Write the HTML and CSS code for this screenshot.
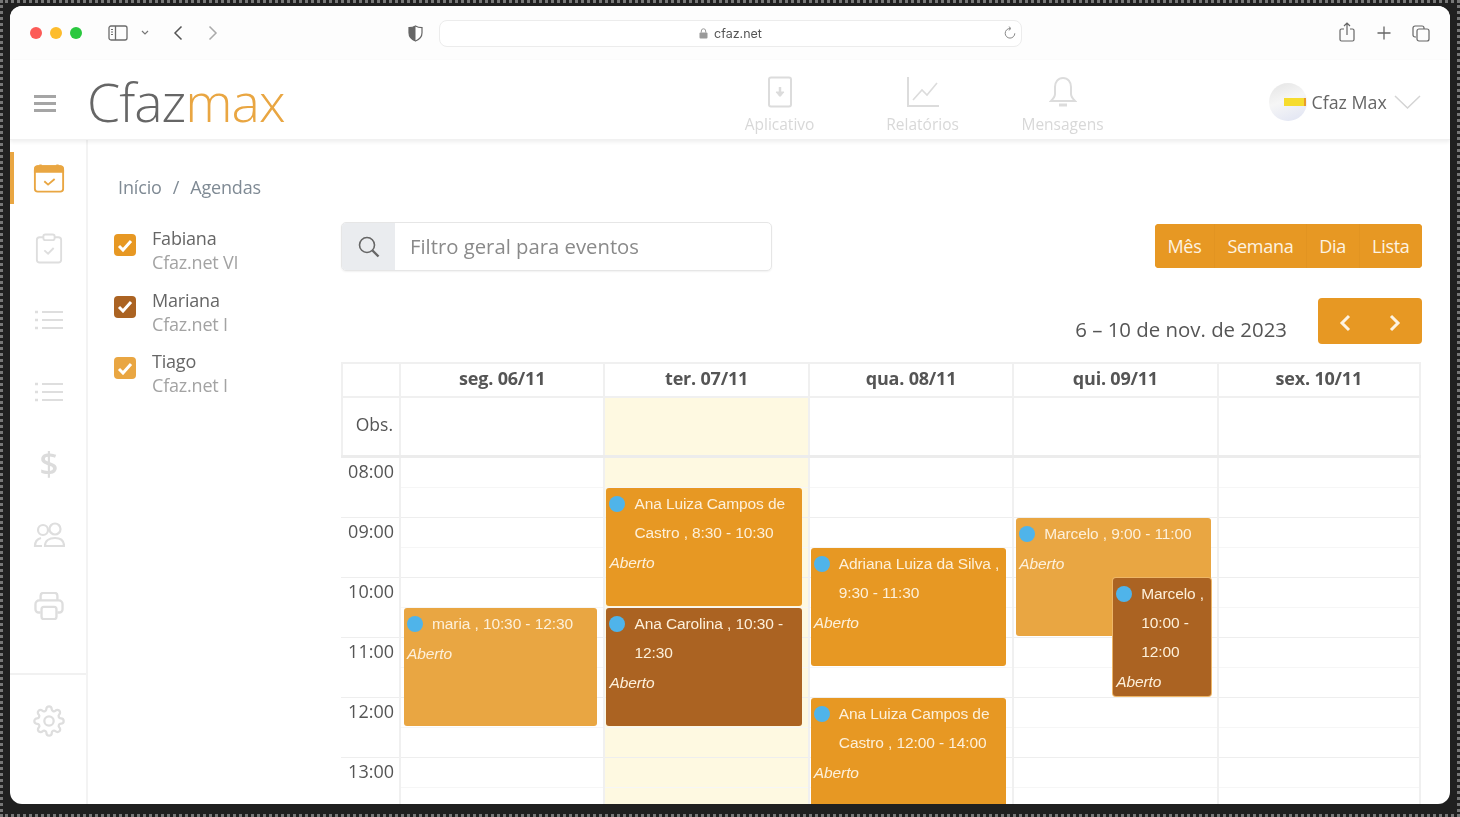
FILE: index.html
```html
<!DOCTYPE html>
<html lang="pt-BR">
<head>
  <meta charset="UTF-8">
  <meta name="viewport" content="width=device-width, initial-scale=1.0">
  <title>Cfazmax – Agendas</title>
  <link rel="stylesheet" href="styles.css">
</head>
<body>
  <div class="window">
    <div class="browser-bar">
      <span class="light light-red"></span>
      <span class="light light-yellow"></span>
      <span class="light light-green"></span>
      <svg class="b-sidebar" width="20" height="16" viewBox="0 0 20 16" fill="none" stroke="#6b6b6b" stroke-width="1.3"><rect x="1" y="1" width="18" height="14" rx="2"/><path d="M7.5 1v14"/><path d="M3 4.5h2M3 7h2M3 9.500h2" stroke-width="1"/></svg>
      <svg class="b-caret" width="8" height="6" viewBox="0 0 8 6" fill="none" stroke="#777" stroke-width="1.2"><path d="M1 1l3 3 3-3"/></svg>
      <svg class="b-back" width="10" height="16" viewBox="0 0 10 16" fill="none" stroke="#555" stroke-width="1.5"><path d="M8.500 1.500L2 8l6.500 6.500"/></svg>
      <svg class="b-fwd" width="10" height="16" viewBox="0 0 10 16" fill="none" stroke="#aaa" stroke-width="1.5"><path d="M1.500 1.500L8 8l-6.500 6.500"/></svg>
      <svg class="b-shield" width="15" height="17" viewBox="0 0 15 17"><path d="M7.500 1C5.500 2.200 3.500 2.600 1 2.700v5c0 4 2.700 6.800 6.500 8.300 3.800-1.500 6.500-4.300 6.500-8.300v-5C11.500 2.600 9.500 2.200 7.500 1z" fill="#fff" stroke="#666" stroke-width="1.200"/><path d="M7.500 1C5.500 2.200 3.500 2.600 1 2.700v5c0 4 2.700 6.800 6.500 8.300z" fill="#666"/></svg>
      <div class="url-bar">
        <svg width="9" height="11" viewBox="0 0 9 11" fill="none"><rect x="0.500" y="4.500" width="8" height="6" rx="1" fill="#9a9a9a"/><path d="M2.300 4.500V3a2.200 2.200 0 014.400 0v1.500" stroke="#9a9a9a"/></svg>
        <span class="url-text">cfaz.net</span>
        <svg class="b-reload" width="12" height="14" viewBox="0 0 12 14" fill="none" stroke="#888" stroke-width="1"><path d="M6 2.500a4.800 4.800 0 104.800 4.800"/><path d="M4.800 0.600L7 2.500 4.800 4.400"/></svg>
      </div>
      <svg class="b-share" width="16" height="20" viewBox="0 0 16 20" fill="none" stroke="#666" stroke-width="1.200"><path d="M5 7H2.500A1.500 1.500 0 001 8.500v9A1.500 1.500 0 002.500 19h11a1.500 1.500 0 001.500-1.500v-9A1.500 1.500 0 0013.500 7H11"/><path d="M8 13V1.500M5 4l3-3 3 3"/></svg>
      <svg class="b-plus" width="14" height="14" viewBox="0 0 14 14" fill="none" stroke="#666" stroke-width="1.300"><path d="M7 0.500v13M0.500 7h13"/></svg>
      <svg class="b-tabs" width="18" height="17" viewBox="0 0 18 17" fill="none" stroke="#666" stroke-width="1.200"><path d="M4 12H3a2 2 0 01-2-2V3a2 2 0 012-2h7a2 2 0 012 2v1"/><rect x="5" y="4" width="12" height="12" rx="2"/></svg>
    </div>

    <header class="app-header">
      <div class="burger"><span></span><span></span><span></span></div>
      <div class="logo">Cfaz<span class="logo-max">max</span></div>
      <nav class="top-nav">
        <a class="top-link top-app">
          <svg width="26" height="32" viewBox="0 0 26 32" fill="none" stroke="#dcdcdc" stroke-width="2"><rect x="2" y="1.500" width="22" height="29" rx="2"/><path d="M13 11v9" stroke-width="2.500"/><path d="M9 16l4 4.500 4-4.500z" fill="#dcdcdc" stroke-width="1"/></svg>
          <span>Aplicativo</span>
        </a>
        <a class="top-link top-rel">
          <svg width="34" height="32" viewBox="0 0 34 32" fill="none" stroke="#dcdcdc" stroke-width="2"><path d="M2 1v29h31"/><path d="M7 24l9-10 5 5 10-12" stroke-width="1.600"/></svg>
          <span>Relatórios</span>
        </a>
        <a class="top-link top-msg">
          <svg width="28" height="32" viewBox="0 0 28 32" fill="none" stroke="#dcdcdc" stroke-width="2"><path d="M14 2c-5 0-8 4-8 9v7c0 3-2 5-4 7h24c-2-2-4-4-4-7v-7c0-5-3-9-8-9z"/><path d="M10 29h8" stroke-width="3"/></svg>
          <span>Mensagens</span>
        </a>
      </nav>
      <div class="profile">
        <div class="avatar"><span class="avatar-bar"></span></div>
        <span class="profile-name">Cfaz Max</span>
        <svg width="27" height="14" viewBox="0 0 27 14" fill="none" stroke="#d4d4d4" stroke-width="1.500"><path d="M1 1l12.500 12L26 1"/></svg>
      </div>
    </header>

    <div class="app-body">
      <aside class="sidebar">
        <div class="side-item side-active">
          <svg width="32" height="31" viewBox="0 0 34 32" fill="none" stroke="#e9a642" stroke-width="2"><rect x="2" y="3" width="30" height="27" rx="3"/><path d="M2 7a4 4 0 014-4h22a4 4 0 014 4v2H2z" fill="#e9a642"/><path d="M8 1v3M26 1v3" stroke-width="2.500"/><path d="M12 19l4 3.500 7-6" stroke-width="2"/></svg>
        </div>
        <div class="side-item">
          <svg width="28" height="31" viewBox="0 0 30 32" fill="none" stroke="#dedede" stroke-width="2"><rect x="2" y="4" width="26" height="27" rx="3"/><rect x="9" y="1" width="12" height="6" rx="2" fill="#fff"/><path d="M10 18l4 3.500 6-6" stroke-width="2"/></svg>
        </div>
        <div class="side-item">
          <svg width="28" height="20" viewBox="0 0 28 20" fill="none" stroke="#dedede" stroke-width="2"><path d="M7 2h21M7 10h21M7 18h21"/><path d="M0 2h3M0 10h3M0 18h3" stroke-width="2.500"/></svg>
        </div>
        <div class="side-item">
          <svg width="28" height="20" viewBox="0 0 28 20" fill="none" stroke="#dedede" stroke-width="2"><path d="M7 2h21M7 10h21M7 18h21"/><path d="M0 2h3M0 10h3M0 18h3" stroke-width="2.500"/></svg>
        </div>
        <div class="side-item side-dollar">$</div>
        <div class="side-item">
          <svg width="32" height="26" viewBox="0 0 32 26" fill="none" stroke="#dedede" stroke-width="2.200"><circle cx="10" cy="8" r="5"/><circle cx="22" cy="7" r="5.500"/><path d="M12 24c0-5 4-8 10-8s9 3 9 8z"/><path d="M9 24H2c0-4 2-7 6-8"/></svg>
        </div>
        <div class="side-item">
          <svg width="32" height="28" viewBox="0 0 32 30" fill="none" stroke="#dedede" stroke-width="2.500"><path d="M7 9V4a3 3 0 013-3h12a3 3 0 013 3v5"/><path d="M7 22H5a3.500 3.500 0 01-3.500-3.500V13A4 4 0 015.500 9h21a4 4 0 014 4v5.500A3.500 3.500 0 0127 22h-2"/><rect x="8" y="16" width="16" height="13" rx="2.500"/></svg>
        </div>
        <div class="side-sep"></div>
        <div class="side-item">
          <svg width="32" height="32" viewBox="0 0 24 24" fill="none" stroke="#dedede" stroke-width="1.700"><circle cx="12" cy="12" r="3.500"/><path d="M19.4 15a1.65 1.65 0 0 0 .33 1.82l.06.06a2 2 0 0 1 0 2.83 2 2 0 0 1-2.83 0l-.06-.06a1.65 1.65 0 0 0-1.82-.33 1.65 1.65 0 0 0-1 1.51V21a2 2 0 0 1-2 2 2 2 0 0 1-2-2v-.09A1.65 1.65 0 0 0 9 19.4a1.65 1.65 0 0 0-1.82.33l-.06.06a2 2 0 0 1-2.83 0 2 2 0 0 1 0-2.83l.06-.06a1.65 1.65 0 0 0 .33-1.82 1.65 1.65 0 0 0-1.51-1H3a2 2 0 0 1-2-2 2 2 0 0 1 2-2h.09A1.65 1.65 0 0 0 4.6 9a1.65 1.65 0 0 0-.33-1.82l-.06-.06a2 2 0 0 1 0-2.83 2 2 0 0 1 2.83 0l.06.06a1.65 1.65 0 0 0 1.82.33H9a1.65 1.65 0 0 0 1-1.51V3a2 2 0 0 1 2-2 2 2 0 0 1 2 2v.09a1.65 1.65 0 0 0 1 1.51 1.65 1.65 0 0 0 1.82-.33l.06-.06a2 2 0 0 1 2.83 0 2 2 0 0 1 0 2.83l-.06.06a1.65 1.65 0 0 0-.33 1.82V9a1.65 1.65 0 0 0 1.51 1H21a2 2 0 0 1 2 2 2 2 0 0 1-2 2h-.09a1.65 1.65 0 0 0-1.51 1z"/></svg>
        </div>
      </aside>

      <main class="content">
        <div class="left-col">
          <div class="crumbs">Início<span class="crumb-sep">/</span>Agendas</div>
          <ul class="people">
            <li class="person">
              <span class="check check-orange"><svg width="16" height="13" viewBox="0 0 16 13" fill="none" stroke="#fff" stroke-width="3"><path d="M2 7l4 4 8-9"/></svg></span>
              <div><div class="person-name">Fabiana</div><div class="person-unit">Cfaz.net VI</div></div>
            </li>
            <li class="person">
              <span class="check check-brown"><svg width="16" height="13" viewBox="0 0 16 13" fill="none" stroke="#fff" stroke-width="3"><path d="M2 7l4 4 8-9"/></svg></span>
              <div><div class="person-name">Mariana</div><div class="person-unit">Cfaz.net I</div></div>
            </li>
            <li class="person">
              <span class="check check-light"><svg width="16" height="13" viewBox="0 0 16 13" fill="none" stroke="#fff" stroke-width="3"><path d="M2 7l4 4 8-9"/></svg></span>
              <div><div class="person-name">Tiago</div><div class="person-unit">Cfaz.net I</div></div>
            </li>
          </ul>
        </div>

        <div class="right-col">
          <div class="tools-row">
            <div class="filter">
              <span class="filter-icon"><svg width="22" height="22" viewBox="0 0 22 22" fill="none" stroke="#666" stroke-width="1.600"><circle cx="9" cy="9" r="7.500"/><path d="M14.500 14.500l6 6" stroke-width="2.400"/></svg></span>
              <span class="filter-text">Filtro geral para eventos</span>
            </div>
            <div class="views">
              <button class="view-btn">Mês</button>
              <button class="view-btn">Semana</button>
              <button class="view-btn">Dia</button>
              <button class="view-btn">Lista</button>
            </div>
          </div>

          <div class="date-row">
            <span class="date-range">6 – 10 de nov. de 2023</span>
            <div class="pager">
              <svg width="12" height="18" viewBox="0 0 12 18" fill="none" stroke="#fdf3e2" stroke-width="3"><path d="M10 2L3 9l7 7"/></svg>
              <svg width="12" height="18" viewBox="0 0 12 18" fill="none" stroke="#fdf3e2" stroke-width="3"><path d="M2 2l7 7-7 7"/></svg>
            </div>
          </div>

          <div class="calendar">
            <div class="cal-row cal-head">
              <div class="cal-cell"></div>
              <div class="cal-cell">seg. 06/11</div>
              <div class="cal-cell">ter. 07/11</div>
              <div class="cal-cell">qua. 08/11</div>
              <div class="cal-cell">qui. 09/11</div>
              <div class="cal-cell">sex. 10/11</div>
            </div>
            <div class="cal-row cal-obs">
              <div class="cal-cell obs-label">Obs.</div>
              <div class="cal-cell"></div>
              <div class="cal-cell cell-today"></div>
              <div class="cal-cell"></div>
              <div class="cal-cell"></div>
              <div class="cal-cell"></div>
            </div>

            <div class="cal-grid">
              <div class="today-col"></div>
              <div class="lines-half"></div>
              <div class="lines-hour"></div>
              <div class="day-line day-1"></div>
              <div class="day-line day-2"></div>
              <div class="day-line day-3"></div>
              <div class="day-line day-4"></div>
              <div class="day-line day-5"></div>

              <div class="hour h-08">08:00</div>
              <div class="hour h-09">09:00</div>
              <div class="hour h-10">10:00</div>
              <div class="hour h-11">11:00</div>
              <div class="hour h-12">12:00</div>
              <div class="hour h-13">13:00</div>

              <div class="event day-1 from-1030 ev-light">
                <div class="ev-title"><span class="ev-dot"></span><span>maria , 10:30 - 12:30</span></div>
                <div class="ev-status">Aberto</div>
              </div>
              <div class="event day-2 from-0830 ev-orange">
                <div class="ev-title"><span class="ev-dot"></span><span>Ana Luiza Campos de Castro , 8:30 - 10:30</span></div>
                <div class="ev-status">Aberto</div>
              </div>
              <div class="event day-2 from-1030 ev-brown">
                <div class="ev-title"><span class="ev-dot"></span><span>Ana Carolina , 10:30 - 12:30</span></div>
                <div class="ev-status">Aberto</div>
              </div>
              <div class="event day-3 from-0930 ev-orange">
                <div class="ev-title"><span class="ev-dot"></span><span>Adriana Luiza da Silva , 9:30 - 11:30</span></div>
                <div class="ev-status">Aberto</div>
              </div>
              <div class="event day-3 from-1200 ev-orange">
                <div class="ev-title"><span class="ev-dot"></span><span>Ana Luiza Campos de Castro , 12:00 - 14:00</span></div>
                <div class="ev-status">Aberto</div>
              </div>
              <div class="event day-4 from-0900 ev-light">
                <div class="ev-title"><span class="ev-dot"></span><span>Marcelo , 9:00 - 11:00</span></div>
                <div class="ev-status">Aberto</div>
              </div>
              <div class="event day-4 from-1000 ev-brown ev-half">
                <div class="ev-title"><span class="ev-dot"></span><span>Marcelo , 10:00 - 12:00</span></div>
                <div class="ev-status">Aberto</div>
              </div>
            </div>
          </div>
        </div>
      </main>
    </div>
  </div>
</body>
</html>
```

FILE: styles.css
```css
* {
  box-sizing: border-box;
}
html, body {
  height: 100%;
  margin: 0;
  overflow: hidden;
}
body {
  background-color: #202020;
  padding: 6px 10px 13px;
  font-family: "Open Sans", Arial, sans-serif;
  color: #555;
}
/* moldura pontilhada da captura */
body::after {
  content: "";
  position: fixed;
  inset: 0;
  border: 3px dotted #777;
  pointer-events: none;
}
.window {
  height: 798px;
  background-color: #fff;
  border-radius: 12px;
  overflow: hidden;
  display: flex;
  flex-direction: column;
  filter: blur(0.5px);
}

/* barra do navegador */
.browser-bar {
  height: 54px;
  flex: none;
  display: flex;
  align-items: center;
  padding-left: 20px;
  background-color: #fdfdfd;
}
.light {
  width: 12px;
  height: 12px;
  border-radius: 50%;
  margin-right: 8px;
}
.light-red { background-color: #fc5b57; }
.light-yellow { background-color: #fdbc2c; }
.light-green { background-color: #2ac83f; }
.b-sidebar { margin-left: 18px; }
.b-caret { margin-left: 13px; }
.b-back { margin-left: 24px; }
.b-fwd { margin-left: 25px; }
.b-shield { margin-left: 190px; }
.url-bar {
  width: 583px;
  height: 27px;
  margin-left: 16px;
  border: 1px solid #ececec;
  border-radius: 8px;
  background-color: #fff;
  display: flex;
  align-items: center;
  justify-content: center;
  gap: 6px;
  position: relative;
}
.url-text {
  font-family: Inter, Roboto, sans-serif;
  font-size: 12.500px;
  color: #555;
}
.b-reload {
  position: absolute;
  right: 5px;
  top: 5px;
}
.b-share { margin-left: 317px; margin-top: -2px; }
.b-plus { margin-left: 22px; }
.b-tabs { margin-left: 21px; }

/* cabecalho */
.app-header {
  height: 80px;
  flex: none;
  display: flex;
  align-items: center;
  padding-top: 8px;
  border-bottom: 1px solid #f1f1f1;
  box-shadow: 0 2px 4px rgba(0,0,0,0.07);
  position: relative;
}
.burger {
  width: 22px;
  margin-left: 24px;
  display: flex;
  flex-direction: column;
  gap: 4px;
}
.burger span {
  height: 3px;
  background-color: #a5a5a5;
}
.logo {
  margin-left: 31px;
  font-size: 53.500px;
  font-weight: 300;
  line-height: 1;
  letter-spacing: -1px;
  color: #666;
  margin-bottom: 4px;
}
.logo-max {
  color: #e9a642;
}
.top-nav {
  display: flex;
  margin-left: 425px;
  margin-top: 3px;
}
.top-link {
  width: 140px;
  display: flex;
  flex-direction: column;
  align-items: center;
  gap: 6px;
  font-size: 15.500px;
  color: #d8d8d8;
}
.top-rel { margin-left: 3px; }
.top-link span {
  line-height: 20px;
}
.profile {
  display: flex;
  align-items: center;
  margin-left: 136px;
  margin-bottom: 4px;
}
.avatar {
  width: 38px;
  height: 38px;
  border-radius: 50%;
  background: linear-gradient(160deg, #e4e4e4, #f6f6f6 45%, #dfe3f3);
  display: flex;
  align-items: center;
  justify-content: flex-end;
}
.avatar-bar {
  width: 22px;
  height: 8px;
  background-color: #f6dc2e;
  border-right: 2px solid #e89b2c;
  margin-right: 1px;
}
.profile-name {
  margin: 0 7px 0 5px;
  font-size: 17.800px;
  color: #666;
}

/* corpo */
.app-body {
  flex: 1;
  display: flex;
  min-height: 0;
}
.sidebar {
  width: 78px;
  flex: none;
  border-right: 2px solid #f3f3f3;
  padding-top: 4px;
  display: flex;
  flex-direction: column;
}
.side-item {
  height: 71.500px;
  padding-left: 2px;
  display: flex;
  align-items: center;
  justify-content: center;
  flex: none;
}
.side-active {
  height: 52px;
  margin-top: 8px;
  margin-bottom: 9px;
  padding-left: 0;
  padding-right: 2px;
  border-left: 4px solid #e9a642;
}
.side-dollar {
  font-size: 33px;
  font-weight: 600;
  color: #dcdcdc;
}
.side-sep {
  height: 2px;
  background-color: #f1f1f1;
  margin-top: 31px;
  margin-bottom: 10px;
  flex: none;
}

.content {
  flex: 1;
  display: flex;
  min-width: 0;
  overflow: hidden;
}
.left-col {
  width: 253px;
  flex: none;
  padding: 34px 0 0 26px;
}
.crumbs {
  padding-left: 4px;
  font-size: 18px;
  line-height: 26px;
  color: #7f8a94;
  letter-spacing: -.15px;
}
.crumb-sep {
  margin: 0 11px;
}
.people {
  list-style: none;
  margin: 26px 0 0;
  padding: 0;
}
.person {
  height: 61.500px;
  display: flex;
  gap: 16px;
}
.check {
  width: 22px;
  height: 22px;
  margin-top: 8px;
  border-radius: 4px;
  display: flex;
  align-items: center;
  justify-content: center;
}
.check-orange { background-color: #e79823; }
.check-brown { background-color: #ab6322; }
.check-light { background-color: #e9a642; }
.person-name {
  font-size: 18px;
  line-height: 24px;
  color: #666;
  letter-spacing: -.2px;
}
.person-unit {
  font-size: 18px;
  line-height: 24px;
  color: #a3a3a3;
  letter-spacing: -.2px;
}

.right-col {
  width: 1080px;
  flex: none;
  padding-top: 82px;
}
.tools-row {
  display: flex;
  align-items: center;
  justify-content: space-between;
  margin-right: -1px;
}
.filter {
  width: 431px;
  height: 49px;
  display: flex;
  border: 1px solid #e6e6e6;
  border-radius: 5px;
  box-shadow: 0 1px 2px rgba(0,0,0,0.06);
  overflow: hidden;
}
.filter-icon {
  width: 53px;
  background-color: #eaecef;
  display: flex;
  align-items: center;
  justify-content: center;
}
.filter-text {
  padding-left: 15px;
  font-size: 20.300px;
  line-height: 47px;
  color: #8a8a8a;
}
.views {
  display: flex;
  border-radius: 4px;
  overflow: hidden;
  background-color: #e79823;
  height: 44px;
  margin-bottom: 1px;
}
.view-btn {
  border: none;
  background-color: #e79823;
  color: #fdf3e2;
  font-family: inherit;
  font-size: 18px;
  letter-spacing: -.3px;
  padding: 0 12.500px;
  border-right: 1px solid #e29421;
}
.view-btn:last-child { border-right: none; }
.date-row {
  display: flex;
  justify-content: flex-end;
  align-items: flex-end;
  gap: 31px;
  margin-top: 27px;
  margin-right: -1px;
}
.date-range {
  font-size: 20.400px;
  line-height: 28px;
  color: #555;
  margin-bottom: 1px;
}
.pager {
  width: 104px;
  height: 46px;
  padding-top: 3px;
  background-color: #e79823;
  border-radius: 4px;
  display: flex;
  align-items: center;
  justify-content: center;
  gap: 38px;
}

/* calendario */
.calendar {
  margin-top: 18px;
  border-top: 2px solid #f0f0f0;
}
.cal-row,
.cal-grid {
  display: grid;
  grid-template-columns: 58px repeat(5, 1fr);
}
.cal-cell {
  border-left: 2px solid #f0f0f0;
}
.cal-cell:last-child {
  border-right: 2px solid #f0f0f0;
}
.cal-head {
  height: 34px;
  font-size: 18px;
  font-weight: 700;
  line-height: 29px;
  text-align: center;
  color: #555;
  letter-spacing: -.2px;
  border-bottom: 2px solid #f0f0f0;
}
.cal-obs {
  height: 60px;
  border-bottom: 3px solid #ececec;
}
.obs-label {
  padding-right: 6px;
  font-size: 17.500px;
  line-height: 53px;
  text-align: right;
}
.cell-today,
.today-col {
  background-color: #fef9e1;
}
.cal-grid {
  grid-template-rows: repeat(12, 30px);
}
.today-col {
  grid-column: 3;
  grid-row: 1 / -1;
}
.lines-half {
  grid-column: 2 / -1;
  grid-row: 1 / -1;
  background: repeating-linear-gradient(to bottom, transparent 0, transparent 29px, #f6f6f6 29px, #f6f6f6 30px, transparent 30px, transparent 60px);
}
.lines-hour {
  grid-column: 1 / -1;
  grid-row: 1 / -1;
  background: repeating-linear-gradient(to bottom, transparent 0, transparent 59px, #eeeeee 59px, #eeeeee 60px);
}
.day-line {
  grid-row: 1 / -1;
  border-left: 2px solid #f0f0f0;
}
.day-line.day-5 {
  border-right: 2px solid #f0f0f0;
}
.day-1 { grid-column: 2; }
.day-2 { grid-column: 3; }
.day-3 { grid-column: 4; }
.day-4 { grid-column: 5; }
.day-5 { grid-column: 6; }
.hour {
  grid-column: 1;
  padding-right: 5px;
  text-align: right;
  font-size: 18px;
  line-height: 27px;
  color: #555;
}
.h-08 { grid-row: 1 / span 2; }
.h-09 { grid-row: 3 / span 2; }
.h-10 { grid-row: 5 / span 2; }
.h-11 { grid-row: 7 / span 2; }
.h-12 { grid-row: 9 / span 2; }
.h-13 { grid-row: 11 / span 2; }

.event {
  margin: 0 6px 2px 3px;
  border-radius: 3px;
  overflow: hidden;
  padding-top: 1px;
  font-family: "Liberation Sans", Arial, sans-serif;
  font-size: 15.500px;
  line-height: 29px;
  letter-spacing: -.1px;
  color: #fdf0da;
}
.event.day-1 { margin-left: 5px; }
.event.day-4 { margin-left: 4px; }
.from-0830 { grid-row: 2 / span 4; }
.from-0900 { grid-row: 3 / span 4; }
.from-0930 { grid-row: 4 / span 4; }
.from-1000 { grid-row: 5 / span 4; }
.from-1030 { grid-row: 6 / span 4; }
.from-1200 { grid-row: 9 / span 4; }
.ev-orange { background-color: #e79823; }
.ev-light { background-color: #e9a642; }
.ev-brown { background-color: #ab6322; }
.event.ev-half {
  margin-left: 101px;
  box-shadow: 0 0 0 1px #eeb667;
}
.ev-title {
  display: flex;
  padding: 0 3px 0 3px;
}
.ev-dot {
  width: 16px;
  height: 16px;
  flex: none;
  margin: 7px 9px 0 0;
  border-radius: 50%;
  background-color: #4fb4ea;
}
.ev-status {
  padding: 1px 0 0 3px;
  font-style: italic;
  color: #fdf0da;
}
```
